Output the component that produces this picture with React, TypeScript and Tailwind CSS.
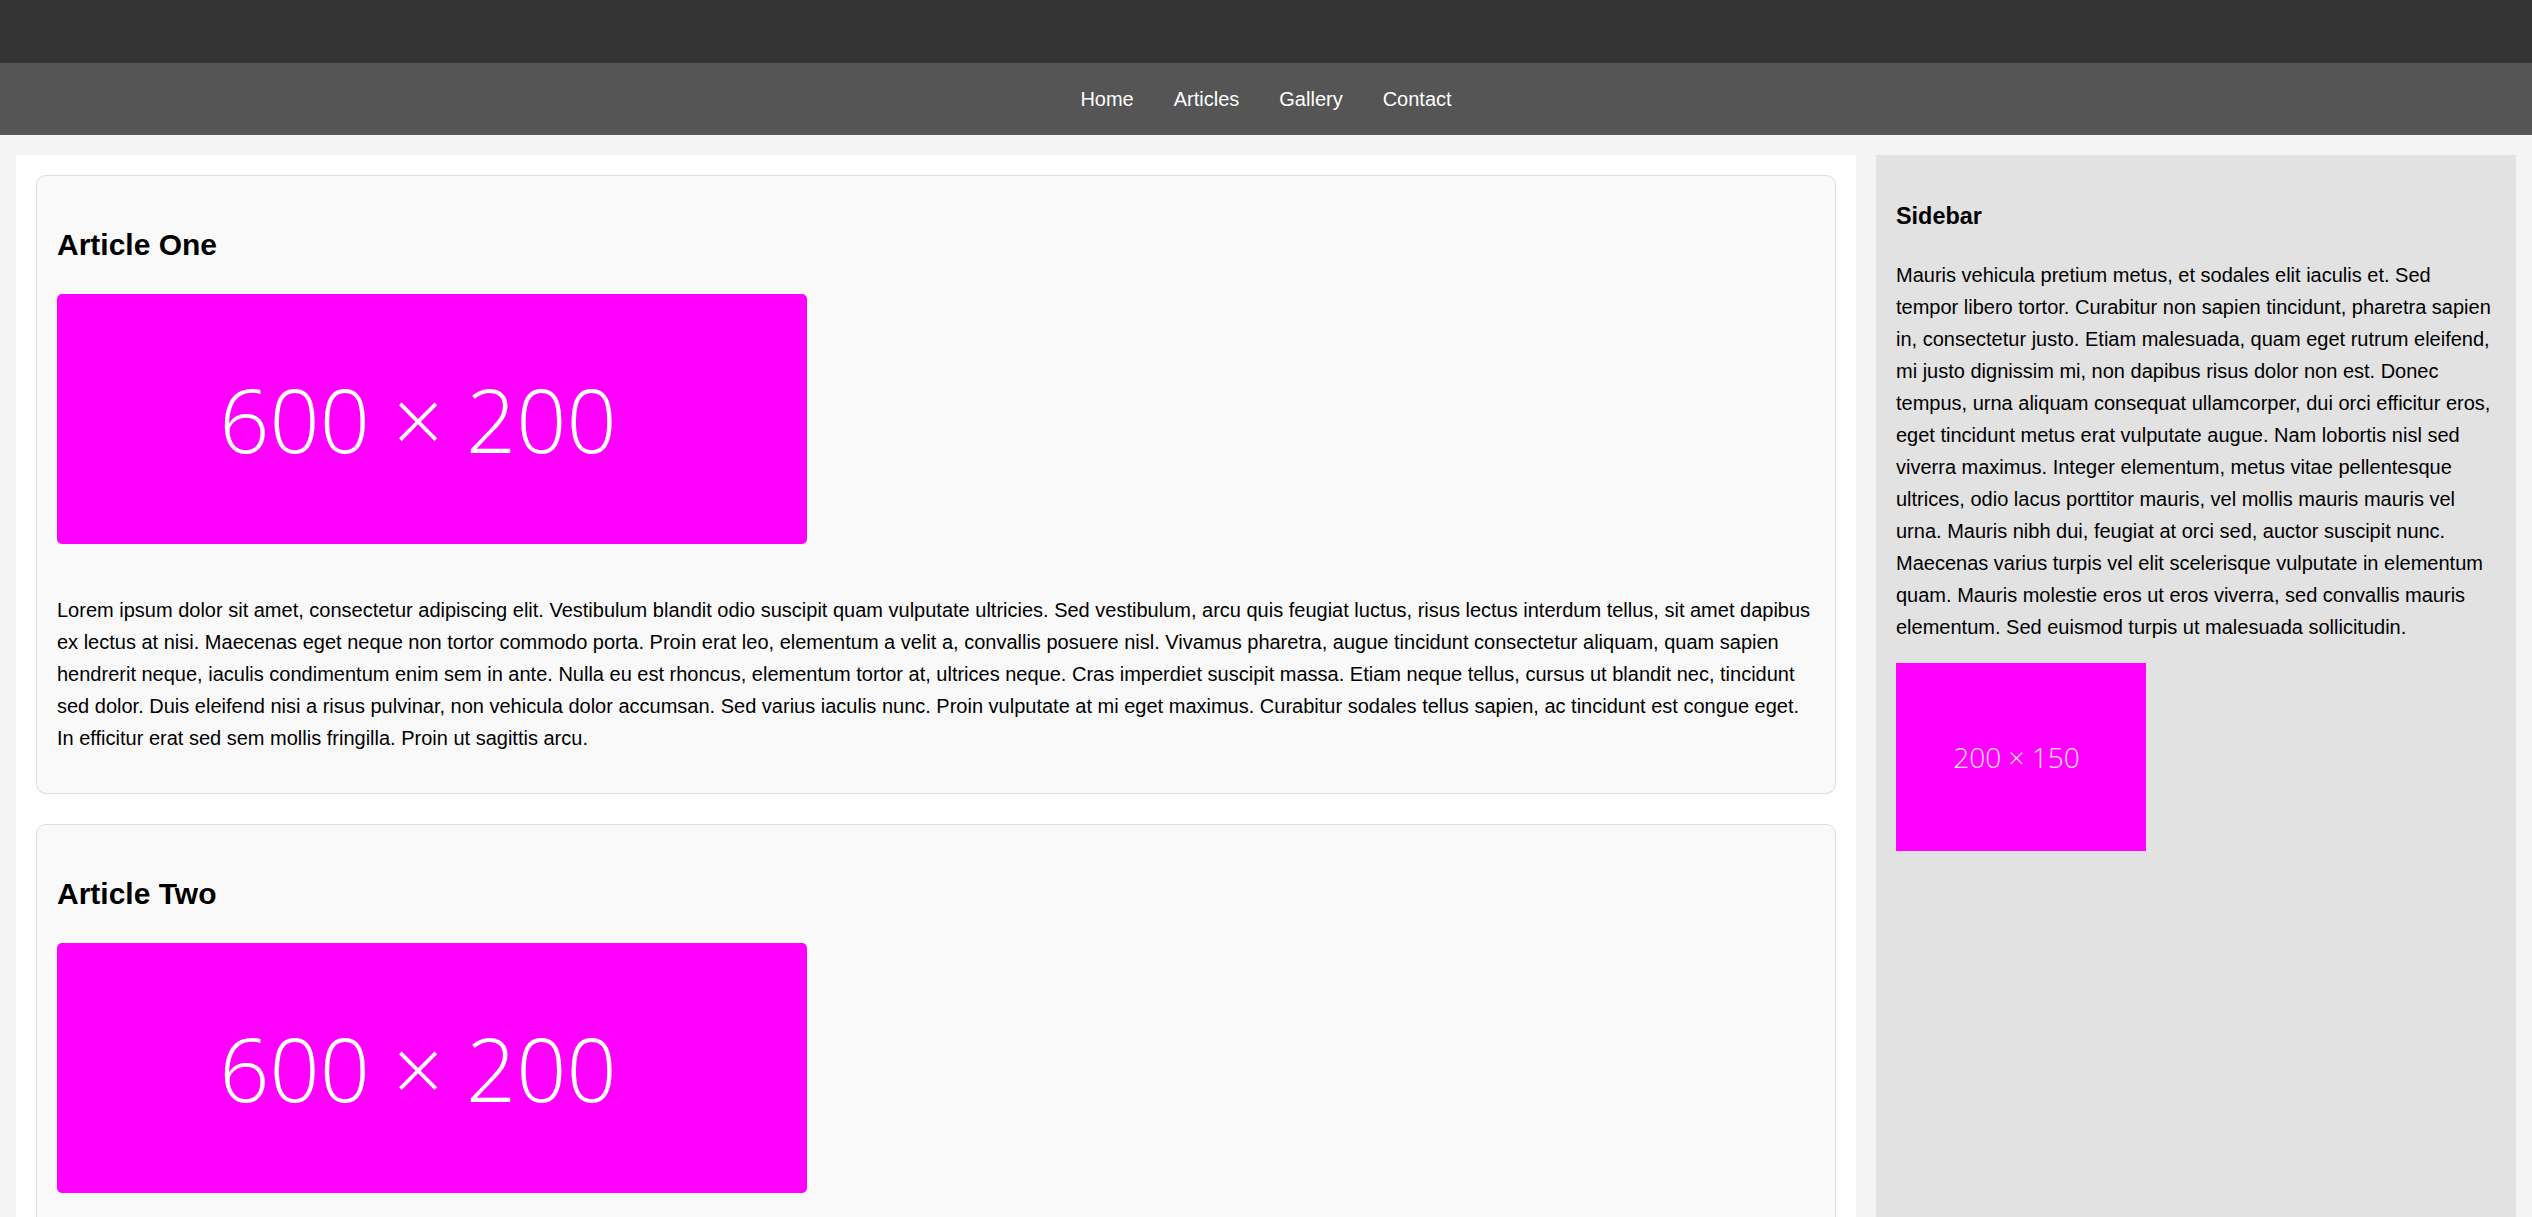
import React from 'react';

const articles = [
    {
        title: 'Article One',
        body: 'Lorem ipsum dolor sit amet, consectetur adipiscing elit. Vestibulum blandit odio suscipit quam vulputate ultricies. Sed vestibulum, arcu quis feugiat luctus, risus lectus interdum tellus, sit amet dapibus ex lectus at nisi. Maecenas eget neque non tortor commodo porta. Proin erat leo, elementum a velit a, convallis posuere nisl. Vivamus pharetra, augue tincidunt consectetur aliquam, quam sapien hendrerit neque, iaculis condimentum enim sem in ante. Nulla eu est rhoncus, elementum tortor at, ultrices neque. Cras imperdiet suscipit massa. Etiam neque tellus, cursus ut blandit nec, tincidunt sed dolor. Duis eleifend nisi a risus pulvinar, non vehicula dolor accumsan. Sed varius iaculis nunc. Proin vulputate at mi eget maximus. Curabitur sodales tellus sapien, ac tincidunt est congue eget. In efficitur erat sed sem mollis fringilla. Proin ut sagittis arcu.',
    },
    {
        title: 'Article Two',
        body: 'Pellentesque habitant morbi tristique senectus et netus et malesuada fames ac turpis egestas. Integer at lacus non lorem dictum laoreet. Donec finibus, justo eu pulvinar congue, lorem arcu mattis neque, vel faucibus ipsum sem ac odio. Suspendisse potenti. Aliquam erat volutpat. Nunc ut turpis vitae nisl vestibulum ultrices. Morbi sit amet orci in magna tincidunt pretium. Vestibulum ante ipsum primis in faucibus orci luctus et ultrices posuere cubilia curae; Fusce at dui nec nisl ullamcorper tempus.',
    },
];

const navLinks = ['Home', 'Articles', 'Gallery', 'Contact'];

const App: React.FC = () => {
    return (
        <div className="min-h-screen bg-[#f4f4f4] font-['Liberation_Sans',Arial,sans-serif] text-[20px] leading-[1.6] text-black">
            <header className="h-[63px] bg-[#333333]"></header>
            <nav className="h-[72px] bg-[#555555] flex items-center justify-center gap-[40px]">
                {navLinks.map((link) => (
                    <a key={link} href="#" className="text-white text-[20px] leading-[32px]">
                        {link}
                    </a>
                ))}
            </nav>

            <div className="flex items-stretch gap-5 px-4 pt-5">
                <main className="flex-1 bg-white p-5 flex flex-col gap-[30px]">
                    {articles.map((a) => (
                        <article key={a.title} className="bg-[#f9f9f9] border border-[#dddddd] rounded-[10px] p-5">
                            <h2 className="text-[30px] font-bold leading-[48px] my-[25px]">{a.title}</h2>
                            <div className="w-[750px] h-[250px] bg-[#ff00ff] rounded-[5px] flex items-center justify-center pr-[28px]">
                                <span className="font-['Open_Sans',sans-serif] font-light text-[88px] leading-none text-white">600 × 200</span>
                            </div>
                            <p className="mt-[50px] mb-[19px]">{a.body}</p>
                        </article>
                    ))}
                </main>

                <aside className="w-[640px] bg-[#e2e2e2] p-5">
                    <h3 className="text-[23.4px] font-bold leading-[1.6] my-[23.4px]">Sidebar</h3>
                    <p className="mb-5">
                        Mauris vehicula pretium metus, et sodales elit iaculis et. Sed tempor libero tortor. Curabitur non sapien tincidunt, pharetra sapien in, consectetur justo. Etiam malesuada, quam eget rutrum eleifend, mi justo dignissim mi, non dapibus risus dolor non est. Donec tempus, urna aliquam consequat ullamcorper, dui orci efficitur eros, eget tincidunt metus erat vulputate augue. Nam lobortis nisl sed viverra maximus. Integer elementum, metus vitae pellentesque ultrices, odio lacus porttitor mauris, vel mollis mauris mauris vel urna. Mauris nibh dui, feugiat at orci sed, auctor suscipit nunc. Maecenas varius turpis vel elit scelerisque vulputate in elementum quam. Mauris molestie eros ut eros viverra, sed convallis mauris elementum. Sed euismod turpis ut malesuada sollicitudin.
                    </p>
                    <div className="w-[250px] h-[188px] bg-[#ff00ff] flex items-center justify-center pr-[9px]">
                        <span className="font-['Open_Sans',sans-serif] font-light text-[28px] leading-none text-white/90">200 × 150</span>
                    </div>
                </aside>
            </div>
        </div>
    );
};

export default App;
